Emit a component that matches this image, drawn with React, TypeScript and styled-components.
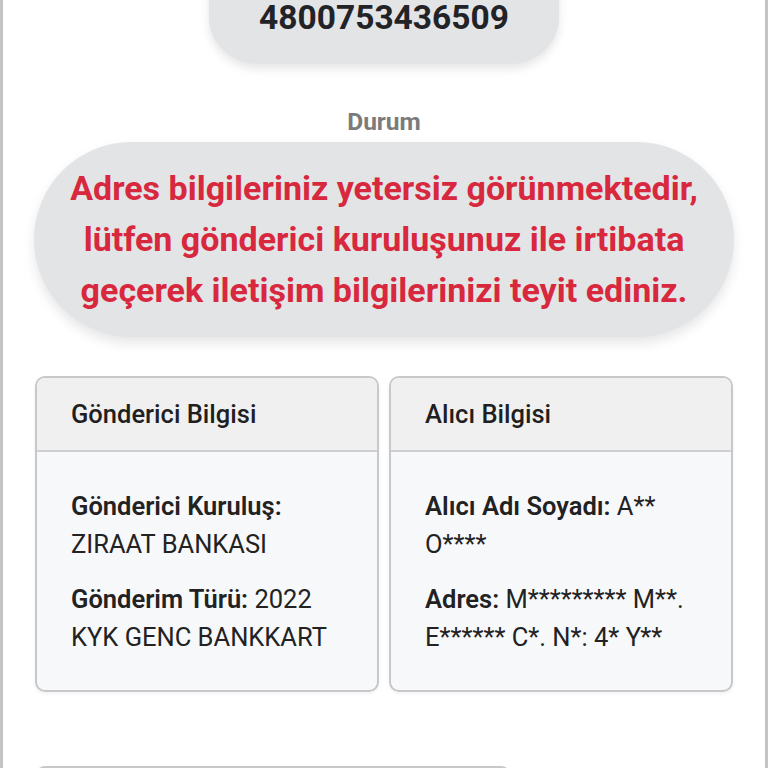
import React from "react";
import styled, { createGlobalStyle } from "styled-components";

const GlobalStyle = createGlobalStyle`
  html, body {
    margin: 0;
    padding: 0;
    background: #ffffff;
    font-family: Roboto, "Noto Sans", "Liberation Sans", sans-serif;
  }
  * {
    box-sizing: border-box;
  }
`;

const Page = styled.div`
  width: 768px;
  height: 768px;
  overflow: hidden;
  background: #ffffff;
  border-left: 3px solid #c4c4c4;
  border-right: 3px solid #c4c4c4;
  display: flex;
  flex-direction: column;
  align-items: center;
`;

const TrackingPill = styled.div`
  width: 350px;
  margin-top: -40px;
  padding: 40px 0 28px;
  border-radius: 0 0 50px 50px / 0 0 46px 46px;
  background: #e3e4e6;
  box-shadow: 0 5px 10px rgba(0, 0, 0, 0.1);
  text-align: center;
  font-size: 33.5px;
  line-height: 36px;
  font-weight: 700;
  color: #222326;
`;

const SectionLabel = styled.div`
  margin-top: 44px;
  font-size: 24.5px;
  line-height: 28px;
  font-weight: 700;
  color: #7b7b7b;
`;

const StatusPill = styled.div`
  width: 700px;
  margin-top: 6px;
  padding: 21px 28px 21px;
  border-radius: 98px;
  background: #e3e4e6;
  box-shadow: 0 6px 12px rgba(0, 0, 0, 0.1);
  text-align: center;
  font-size: 34px;
  line-height: 51px;
  font-weight: 700;
  color: #d8283e;
`;

const CardGrid = styled.div`
  width: 698px;
  margin-top: 39px;
  display: grid;
  grid-template-columns: 1fr 1fr;
  gap: 10px;
`;

const Card = styled.div<{ $width?: number }>`
  width: ${(p) => (p.$width ? `${p.$width}px` : "auto")};
  border: 2px solid #c8c8ca;
  border-radius: 10px;
  overflow: hidden;
  background: #f7f8fa;
  box-shadow: 0 2px 4px rgba(0, 0, 0, 0.05);
`;

const CardHeader = styled.div`
  height: 74px;
  padding: 0 34px;
  display: flex;
  align-items: center;
  background: #f0f0f1;
  border-bottom: 2px solid #cfcfd1;
  font-size: 25.5px;
  font-weight: 500;
  color: #1f1f21;
`;

const CardBody = styled.div`
  padding: 35px 34px 34px;
  display: flex;
  flex-direction: column;
  gap: 17px;
`;

const Field = styled.div`
  font-size: 25.5px;
  line-height: 38px;
  color: #222222;
  b {
    font-weight: 600;
  }
`;

const BottomRow = styled.div`
  width: 698px;
  margin-top: 74px;
  display: flex;
`;

export default function App() {
  return (
    <>
      <GlobalStyle />
      <Page>
        <TrackingPill>4800753436509</TrackingPill>
        <SectionLabel>Durum</SectionLabel>
        <StatusPill>
          Adres bilgileriniz yetersiz görünmektedir, lütfen gönderici kuruluşunuz ile irtibata geçerek iletişim
          bilgilerinizi teyit ediniz.
        </StatusPill>
        <CardGrid>
          <Card>
            <CardHeader>Gönderici Bilgisi</CardHeader>
            <CardBody>
              <Field>
                <b>Gönderici Kuruluş:</b> ZIRAAT BANKASI
              </Field>
              <Field>
                <b>Gönderim Türü:</b> 2022 KYK GENC BANKKART
              </Field>
            </CardBody>
          </Card>
          <Card>
            <CardHeader>Alıcı Bilgisi</CardHeader>
            <CardBody>
              <Field>
                <b>Alıcı Adı Soyadı:</b> A** O****
              </Field>
              <Field>
                <b>Adres:</b> M********* M**. E****** C*. N*: 4* Y**
              </Field>
            </CardBody>
          </Card>
        </CardGrid>
        <BottomRow>
          <Card $width={476}>
            <CardHeader />
          </Card>
        </BottomRow>
      </Page>
    </>
  );
}
